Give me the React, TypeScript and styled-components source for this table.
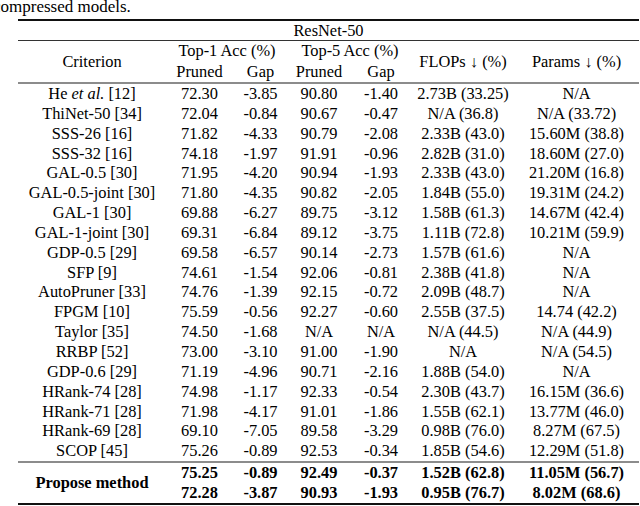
import React from "react";
import styled, { createGlobalStyle } from "styled-components";

const COLS = "148px 67px 55px 62px 62px 102px 125px";
const ROW_H = 19.85;

const GlobalStyle = createGlobalStyle`
  html, body {
    margin: 0;
    padding: 0;
    background: #ffffff;
  }
  body {
    font-family: "Liberation Serif", "Times New Roman", serif;
    color: #000000;
    overflow: hidden;
  }
`;

const Page = styled.div`
  width: 640px;
  height: 506px;
  overflow: hidden;
  display: flex;
  flex-direction: column;
`;

const Caption = styled.div`
  font-size: 17px;
  line-height: 17px;
  height: 21px;
  margin: -2px 0 0 -7px;
  white-space: nowrap;
`;

const Table = styled.div`
  width: 621px;
  margin-left: 18px;
  border-top: 2px solid #111;
  border-bottom: 2px solid #111;
  font-size: 16.4px;
`;

const GroupTitle = styled.div`
  height: 19px;
  line-height: 19px;
  text-align: center;
  border-bottom: 1px solid #333;
`;

const HeadGrid = styled.div`
  display: grid;
  grid-template-columns: ${COLS};
  grid-template-rows: 20.5px 20.5px;
  border-bottom: 2px solid #8c8c8c;
`;

const HeadCell = styled.div<{ $col: string; $row: string }>`
  grid-column: ${(p) => p.$col};
  grid-row: ${(p) => p.$row};
  display: flex;
  align-items: center;
  justify-content: center;
  white-space: nowrap;
`;

const Body = styled.div`
  display: flex;
  flex-direction: column;
`;

const Row = styled.div`
  display: grid;
  grid-template-columns: ${COLS};
  height: ${ROW_H}px;
  line-height: ${ROW_H}px;
`;

const Cell = styled.div`
  text-align: center;
  white-space: nowrap;
`;

const ProposedGrid = styled.div`
  display: grid;
  grid-template-columns: ${COLS};
  grid-template-rows: ${ROW_H}px ${ROW_H}px;
  line-height: ${ROW_H}px;
  border-top: 2px solid #8c8c8c;
  font-weight: bold;
`;

const MethodCell = styled.div`
  grid-column: 1;
  grid-row: 1 / span 2;
  display: flex;
  align-items: center;
  justify-content: center;
  white-space: nowrap;
`;

type Entry = {
  name: React.ReactNode;
  v: string[];
};

const rows: Entry[] = [
  { name: <>He <i>et al.</i> [12]</>, v: ["72.30", "-3.85", "90.80", "-1.40", "2.73B (33.25)", "N/A"] },
  { name: "ThiNet-50 [34]", v: ["72.04", "-0.84", "90.67", "-0.47", "N/A (36.8)", "N/A (33.72)"] },
  { name: "SSS-26 [16]", v: ["71.82", "-4.33", "90.79", "-2.08", "2.33B (43.0)", "15.60M (38.8)"] },
  { name: "SSS-32 [16]", v: ["74.18", "-1.97", "91.91", "-0.96", "2.82B (31.0)", "18.60M (27.0)"] },
  { name: "GAL-0.5 [30]", v: ["71.95", "-4.20", "90.94", "-1.93", "2.33B (43.0)", "21.20M (16.8)"] },
  { name: "GAL-0.5-joint [30]", v: ["71.80", "-4.35", "90.82", "-2.05", "1.84B (55.0)", "19.31M (24.2)"] },
  { name: "GAL-1 [30]", v: ["69.88", "-6.27", "89.75", "-3.12", "1.58B (61.3)", "14.67M (42.4)"] },
  { name: "GAL-1-joint [30]", v: ["69.31", "-6.84", "89.12", "-3.75", "1.11B (72.8)", "10.21M (59.9)"] },
  { name: "GDP-0.5 [29]", v: ["69.58", "-6.57", "90.14", "-2.73", "1.57B (61.6)", "N/A"] },
  { name: "SFP [9]", v: ["74.61", "-1.54", "92.06", "-0.81", "2.38B (41.8)", "N/A"] },
  { name: "AutoPruner [33]", v: ["74.76", "-1.39", "92.15", "-0.72", "2.09B (48.7)", "N/A"] },
  { name: "FPGM [10]", v: ["75.59", "-0.56", "92.27", "-0.60", "2.55B (37.5)", "14.74 (42.2)"] },
  { name: "Taylor [35]", v: ["74.50", "-1.68", "N/A", "N/A", "N/A (44.5)", "N/A (44.9)"] },
  { name: "RRBP [52]", v: ["73.00", "-3.10", "91.00", "-1.90", "N/A", "N/A (54.5)"] },
  { name: "GDP-0.6 [29]", v: ["71.19", "-4.96", "90.71", "-2.16", "1.88B (54.0)", "N/A"] },
  { name: "HRank-74 [28]", v: ["74.98", "-1.17", "92.33", "-0.54", "2.30B (43.7)", "16.15M (36.6)"] },
  { name: "HRank-71 [28]", v: ["71.98", "-4.17", "91.01", "-1.86", "1.55B (62.1)", "13.77M (46.0)"] },
  { name: "HRank-69 [28]", v: ["69.10", "-7.05", "89.58", "-3.29", "0.98B (76.0)", "8.27M (67.5)"] },
  { name: "SCOP [45]", v: ["75.26", "-0.89", "92.53", "-0.34", "1.85B (54.6)", "12.29M (51.8)"] },
];

const proposed: string[][] = [
  ["75.25", "-0.89", "92.49", "-0.37", "1.52B (62.8)", "11.05M (56.7)"],
  ["72.28", "-3.87", "90.93", "-1.93", "0.95B (76.7)", "8.02M (68.6)"],
];

export default function App() {
  return (
    <Page>
      <GlobalStyle />
      <Caption>compressed models.</Caption>
      <Table>
        <GroupTitle>ResNet-50</GroupTitle>
        <HeadGrid>
          <HeadCell $col="1" $row="1 / span 2">Criterion</HeadCell>
          <HeadCell $col="2 / span 2" $row="1">Top-1 Acc (%)</HeadCell>
          <HeadCell $col="4 / span 2" $row="1">Top-5 Acc (%)</HeadCell>
          <HeadCell $col="6" $row="1 / span 2">FLOPs ↓ (%)</HeadCell>
          <HeadCell $col="7" $row="1 / span 2">Params ↓ (%)</HeadCell>
          <HeadCell $col="2" $row="2">Pruned</HeadCell>
          <HeadCell $col="3" $row="2">Gap</HeadCell>
          <HeadCell $col="4" $row="2">Pruned</HeadCell>
          <HeadCell $col="5" $row="2">Gap</HeadCell>
        </HeadGrid>
        <Body>
          {rows.map((r, i) => (
            <Row key={i}>
              <Cell>{r.name}</Cell>
              {r.v.map((x, j) => (
                <Cell key={j}>{x}</Cell>
              ))}
            </Row>
          ))}
        </Body>
        <ProposedGrid>
          <MethodCell>Propose method</MethodCell>
          {proposed.map((vals, ri) =>
            vals.map((x, j) => (
              <Cell key={`${ri}-${j}`} style={{ gridRow: ri + 1, gridColumn: j + 2 }}>
                {x}
              </Cell>
            ))
          )}
        </ProposedGrid>
      </Table>
    </Page>
  );
}
